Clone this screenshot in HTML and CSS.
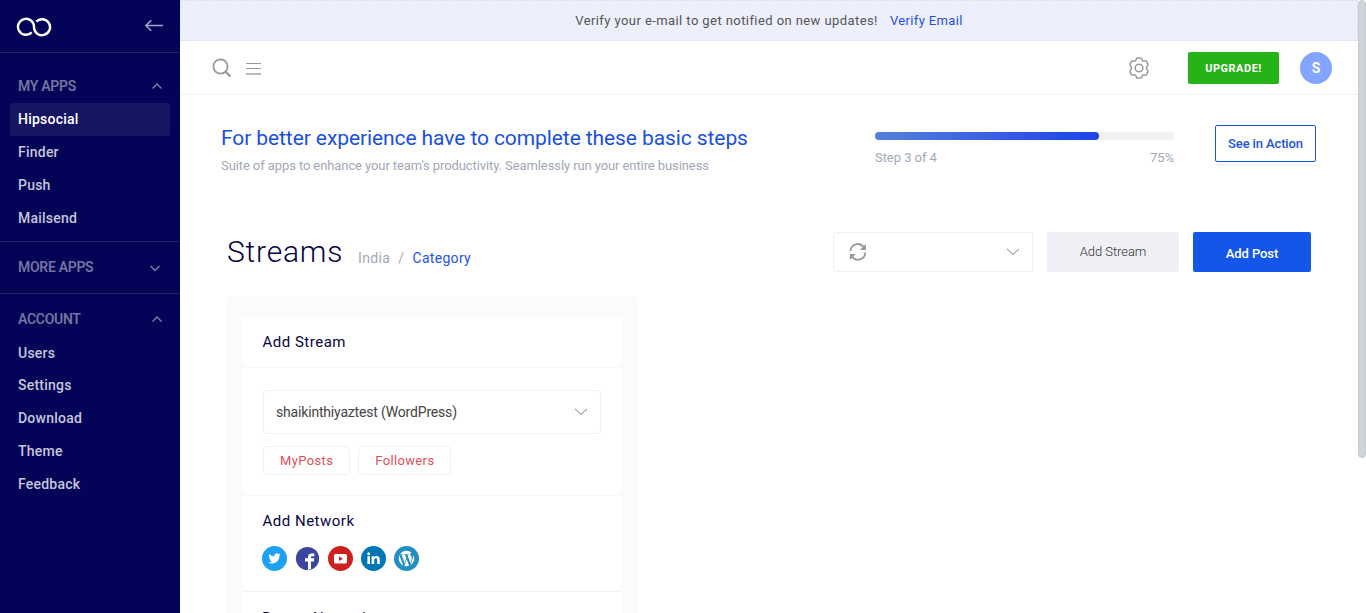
FILE: index.html
```html
<!DOCTYPE html>
<html lang="en">
<head>
<meta charset="utf-8">
<title>Hipsocial - Streams</title>
<link rel="stylesheet" href="styles.css">
</head>
<body>
<div class="app">
  <aside class="sidebar">
    <div class="brand">
      <svg class="logo" width="36" height="22" viewBox="0 0 36 22" fill="none" stroke="#fff" stroke-width="2.4">
        <path d="M15.760 16.360A8 8 0 1 1 18 11A8 8 0 1 0 20.240 5.640"/>
      </svg>
      <svg width="20" height="14" viewBox="0 0 20 14" fill="none" stroke="#a3a3c9" stroke-width="1.5"><path d="M19 6.500H2M7.200 1.200L1.800 6.500l5.400 5.300"/></svg>
    </div>
    <nav class="group apps">
      <h2 class="group-title">MY APPS <svg class="chev" viewBox="0 0 12 8"><path d="M1.500 6.500L6 2l4.500 4.500"/></svg></h2>
      <a class="item active">Hipsocial</a>
      <a class="item">Finder</a>
      <a class="item">Push</a>
      <a class="item">Mailsend</a>
    </nav>
    <nav class="group more">
      <h2 class="group-title">MORE APPS <svg class="chev down" viewBox="0 0 12 8"><path d="M1.500 2L6 6.500 10.500 2"/></svg></h2>
    </nav>
    <nav class="group account">
      <h2 class="group-title">ACCOUNT <svg class="chev" viewBox="0 0 12 8"><path d="M1.500 6.500L6 2l4.500 4.500"/></svg></h2>
      <a class="item first">Users</a>
      <a class="item">Settings</a>
      <a class="item">Download</a>
      <a class="item">Theme</a>
      <a class="item">Feedback</a>
    </nav>
  </aside>
  <main class="main">
    <div class="notice"><span>Verify your e-mail to get notified on new updates!</span><a>Verify Email</a></div>
    <header class="topbar">
      <svg class="search" width="20" height="20" viewBox="0 0 20 20" fill="none" stroke="#999" stroke-width="1.800"><circle cx="8.500" cy="8.500" r="7.100"/><path d="M13.300 13.500l5 5" stroke-width="2.400"/></svg>
      <svg class="menu" width="16" height="14" viewBox="0 0 16 14" fill="#999"><path d="M0 2h15v1H0zM0 7h15v1H0z"/><path d="M0 12h15v2H0z" fill="#bbb"/></svg>
      <svg class="gear" width="22" height="24" viewBox="0 0 22 24" fill="none" stroke="#999" stroke-width="1.500" stroke-linejoin="round"><circle cx="11" cy="12" r="3.800"/><path d="M9.300 2h3.400q.9 0 1 .9c.2 2 1.500 2.800 3.300 2q.9-.4 1.400.4l1.600 2.800q.4.8-.3 1.400c-1.600 1.200-1.600 3.800 0 5q.7.600.3 1.400l-1.600 2.800q-.5.800-1.400.4c-1.800-.8-3.100 0-3.300 2q-.1.900-1 .9H9.300q-.9 0-1-.9c-.2-2-1.500-2.800-3.300-2q-.9.4-1.400-.4L2 15.900q-.4-.8.300-1.400c1.600-1.200 1.600-3.800 0-5Q1.600 8.900 2 8.100l1.600-2.800q.5-.8 1.400-.4c1.800.8 3.100 0 3.300-2q.1-.9 1-.9z"/></svg>
      <a class="upgrade">UPGRADE!</a>
      <span class="avatar">S</span>
    </header>
    <section class="steps">
      <div class="steps-text">
        <h1>For better experience have to complete these basic steps</h1>
        <p>Suite of apps to enhance your team's productivity. Seamlessly run your entire business</p>
      </div>
      <div class="progress">
        <div class="track"><div class="fill" style="width:75%"></div></div>
        <div class="progress-labels"><span>Step 3 of 4</span><span>75%</span></div>
      </div>
      <a class="see">See in Action</a>
    </section>
    <section class="heading">
      <h1 class="page-title">Streams</h1>
      <div class="crumbs"><span>India</span><span class="slash">/</span><a>Category</a></div>
      <div class="picker">
        <svg width="18" height="18" viewBox="0 0 18 18" fill="none" stroke="#999" stroke-width="1.800"><path d="M1.500 8A7.200 7.200 0 0 1 14.700 4.300M16.200 9.600A7.200 7.200 0 0 1 3 13.500"/><path d="M16.900 1v6h-6zM.8 17v-6h6z" fill="#999" stroke="none"/></svg>
        <svg class="arrow" viewBox="0 0 14 8"><path d="M1 1l6 5.500L13 1"/></svg>
      </div>
      <a class="btn-stream">Add Stream</a>
      <a class="btn-post">Add Post</a>
    </section>
    <section class="board">
      <div class="card">
        <h3 class="card-title">Add Stream</h3>
        <div class="card-body">
          <div class="select">shaikinthiyaztest (WordPress)<svg class="arrow" viewBox="0 0 14 8"><path d="M1 1l6 5.500L13 1"/></svg></div>
          <div class="tags"><a>MyPosts</a><a>Followers</a></div>
        </div>
        <div class="networks">
          <h3>Add Network</h3>
          <div class="icons">
            <svg viewBox="0 0 25 25"><circle cx="12.500" cy="12.500" r="12.500" fill="#1da1f2"/><path fill="#fff" d="M18.500 8.600a5 5 0 0 1-1.400.4 2.500 2.500 0 0 0 1.100-1.400 5 5 0 0 1-1.600.6 2.500 2.500 0 0 0-4.300 2.300A7 7 0 0 1 7.200 7.900a2.500 2.500 0 0 0 .8 3.400 2.500 2.500 0 0 1-1.100-.3c0 1.200.9 2.200 2 2.500a2.500 2.500 0 0 1-1.100 0 2.500 2.500 0 0 0 2.300 1.700A5 5 0 0 1 6.400 16.300a7.100 7.100 0 0 0 10.900-6.300c.5-.4.900-.9 1.200-1.400z"/></svg>
            <svg viewBox="0 0 25 25"><circle cx="12.500" cy="12.500" r="11.600" fill="#3b479e"/><path fill="#fff" d="M13 24v-8.500h-3v-3.300h3v-1c0-2.600 1.500-3.700 3.700-3.700h2.600v2.800h-1.900c-1.100 0-1.400.5-1.400 1.300v.6h3.300l-.4 3.300h-2.900V23z"/></svg>
            <svg viewBox="0 0 25 25"><circle cx="12.500" cy="12.500" r="12.500" fill="#cd201f"/><rect x="6" y="8" width="13" height="9.500" rx="1.600" fill="#fff"/><path fill="#cd201f" d="M11 10.500v4.400l4-2.200z"/></svg>
            <svg viewBox="0 0 25 25"><circle cx="12.500" cy="12.500" r="12.500" fill="#0077b5"/><path fill="#fff" d="M6.400 10.200H9V18H6.400zM10.600 10.200h2.500v1.100c.5-.8 1.300-1.300 2.500-1.300 2.500 0 3.200 1.500 3.200 3.800V18h-2.600v-3.800c0-1.100-.2-1.900-1.400-1.900-1.200 0-1.600.9-1.600 1.900V18h-2.600z"/><circle cx="7.700" cy="7.700" r="1.500" fill="#fff"/></svg>
            <svg viewBox="0 0 25 25"><circle cx="12.500" cy="12.500" r="12.500" fill="#218fc1"/><g transform="translate(3.500 3.500) scale(.75)" fill="#fff"><path d="M1.720 12c0 4.070 2.360 7.580 5.790 9.240L2.600 7.820A10.200 10.200 0 0 0 1.720 12zM18.960 11.480c0-1.270-.46-2.150-.85-2.830-.52-.85-1.010-1.570-1.010-2.420 0-.95.720-1.830 1.730-1.830h.13A10.280 10.280 0 0 0 3.410 6.350h.66c1.080 0 2.740-.13 2.740-.13.550-.03.620.78.060.85 0 0-.56.060-1.180.1l3.750 11.160 2.260-6.770-1.610-4.390c-.55-.04-1.080-.1-1.080-.1-.56-.04-.5-.89.060-.85 0 0 1.700.13 2.710.13 1.080 0 2.740-.13 2.740-.13.560-.03.620.78.070.85 0 0-.56.060-1.180.1l3.720 11.080 1.060-3.370c.44-1.410.77-2.430.77-3.400zM12.180 12.900l-3.090 8.980a10.300 10.300 0 0 0 6.330-.17zM21.030 7.060c.04.330.07.680.07 1.060 0 1.050-.2 2.220-.78 3.690l-3.140 9.080a10.270 10.270 0 0 0 3.850-13.830z"/></g></svg>
          </div>
        </div>
        <div class="next"><h3>Recent Network</h3></div>
      </div>
    </section>
  </main>
  <div class="scrollbar"><div class="thumb"></div></div>
</div>
</body>
</html>
```
FILE: styles.css
```css
* { box-sizing: border-box; }
body, h1, h2, h3, p { margin: 0; }
body { font-family: Roboto, sans-serif; font-size: 14px; height: 613px; overflow: hidden; background: #fff; }
svg { display: block; flex: none; }
.app { display: flex; height: 613px; overflow: hidden; }
.sidebar { width: 180px; flex: none; background: #030357; }
.brand { height: 53px; border-bottom: 1px solid #20206a; display: flex; align-items: center; justify-content: space-between; padding: 0 16px; }
.logo { margin-top: 2px; }
.group { border-bottom: 1px solid #20206a; padding: 0 10px; }
.apps { height: 189px; padding-top: 21px; }
.more { height: 52px; padding-top: 13px; }
.account { border: 0; padding-top: 13px; }
.group-title { height: 24px; line-height: 24px; font-size: 14px; font-weight: 600; letter-spacing: -.3px; color: #74749f; padding: 0 8px; display: flex; justify-content: space-between; align-items: center; }
.apps .group-title { margin-bottom: 5px; }
.chev { width: 12px; height: 8px; fill: none; stroke: #8080aa; stroke-width: 1.4; }
.group-title .chev { margin-right: -.5px; }
.group-title .down { margin-right: 1.500px; margin-top: 1px; }
.item { display: block; height: 33px; line-height: 33px; padding: 0 8px; font-size: 14px; font-weight: 500; letter-spacing: .23px; color: #c6c6da; border-radius: 2px; }
.active { background: #151562; color: #fff; }
.item.first { margin-top: 6px; height: 32px; }
.main { flex: 1; min-width: 0; }
.notice { height: 41px; border: 1px dashed #dfe0ee; background: #edeffc; display: flex; align-items: center; justify-content: center; gap: 12px; font-size: 13px; letter-spacing: .42px; color: #555; }
.notice a { color: #1f4fe3; letter-spacing: .36px; }
.topbar { height: 54px; border-bottom: 1px solid #f1f1f1; display: flex; align-items: center; padding: 0 26px 0 32px; }
.menu { margin-left: 14px; }
.gear { margin-left: auto; }
.upgrade { margin-left: 38px; width: 91px; height: 32px; line-height: 33px; border-radius: 2px; background: #26b317; color: #fff; font-size: 11px; font-weight: 700; text-align: center; letter-spacing: .5px; }
.avatar { margin-left: 21px; width: 32px; height: 32px; line-height: 33px; border-radius: 50%; background: #83a4ff; color: #fff; font-weight: 700; text-align: center; }
.steps { height: 137px; padding: 30px 42px 0 41px; display: flex; align-items: flex-start; }
.steps-text h1 { font-size: 21px; line-height: 26px; font-weight: 400; color: #1a50e2; letter-spacing: -.09px; white-space: nowrap; }
.steps-text p { margin-top: 6px; font-size: 13px; line-height: 18px; letter-spacing: -.093px; color: #a2a8b8; white-space: nowrap; }
.progress { margin-left: auto; width: 299px; padding-top: 7px; }
.track { height: 8px; border-radius: 4px; background: #f1f1f1; }
.fill { height: 8px; border-radius: 4px; background: linear-gradient(90deg, #5680db, #1b43e6); }
.progress-labels { display: flex; justify-content: space-between; margin-top: 9px; font-size: 13px; line-height: 18px; letter-spacing: -.05px; color: #a2a8b8; }
.see { margin-left: 41px; width: 101px; height: 37px; line-height: 35px; border: 1px solid #1a55d8; border-radius: 2px; color: #2453db; font-size: 13px; font-weight: 500; letter-spacing: -.13px; text-align: center; }
.heading { height: 65px; padding: 0 47px; display: flex; align-items: flex-start; }
.page-title { width: 115px; font-size: 30px; line-height: 39px; font-weight: 300; letter-spacing: .8px; color: #050545; }
.crumbs { margin-left: 16px; padding-top: 16px; font-size: 14px; line-height: 20px; letter-spacing: .38px; color: #a2a8b8; display: flex; gap: 8px; }
.crumbs a { color: #2453e5; letter-spacing: .3px; }
.picker { margin-left: auto; width: 200px; height: 40px; border: 1px solid #f1f1f1; border-radius: 2px; padding: 0 12px 0 15px; display: flex; align-items: center; justify-content: space-between; }
.arrow { width: 14px; height: 8px; fill: none; stroke: #aaa; stroke-width: 1.2; }
.btn-stream { margin-left: 14px; width: 132px; height: 40px; line-height: 39px; text-align: center; background: #eff0f5; border-radius: 2px; color: #333; font-size: 13px; font-weight: 300; letter-spacing: -.05px; }
.btn-post { margin-left: 14px; width: 118px; height: 40px; line-height: 43px; text-align: center; background: #1456e8; border-radius: 2px; color: #fff; font-size: 13px; font-weight: 500; letter-spacing: -.1px; }
.board { margin-left: 47px; width: 410px; height: 400px; background: #fbfbfd; padding: 20px 16px 0; }
.card { width: 378px; height: 380px; background: #fff; border-radius: 4px; }
h3 { font-size: 15px; font-weight: 400; line-height: 20px; letter-spacing: .5px; color: #050545; }
.card-title { height: 51px; padding: 15px 19.500px; border-bottom: 1px solid #f7f7fa; }
.card-body { height: 128px; padding: 22px 20px 0; border-bottom: 1px solid #f7f7fa; }
.select { height: 44px; border: 1px solid #f1f1f1; border-radius: 4px; padding: 0 12px; display: flex; align-items: center; justify-content: space-between; font-size: 14px; letter-spacing: -.18px; color: #444; }
.tags { display: flex; gap: 8px; margin-top: 12px; }
.tags a { height: 29px; line-height: 27px; padding: 0 16px; border: 1px solid #f1f1f1; border-radius: 4px; font-size: 13px; letter-spacing: .36px; color: #e05058; }
.networks { height: 96px; padding: 15px 19.500px 0; border-bottom: 1px solid #f1f1f3; }
.icons { display: flex; gap: 8px; margin: 15px 0 0 -.5px; }
.icons svg { width: 25px; height: 25px; }
.next { padding: 16px 19px; }
.next h3 { letter-spacing: .15px; }
.scrollbar { width: 8px; flex: none; }
.thumb { height: 458px; background: #cdd6da; border: 1px solid #c3cbcf; border-radius: 4px; }
```
